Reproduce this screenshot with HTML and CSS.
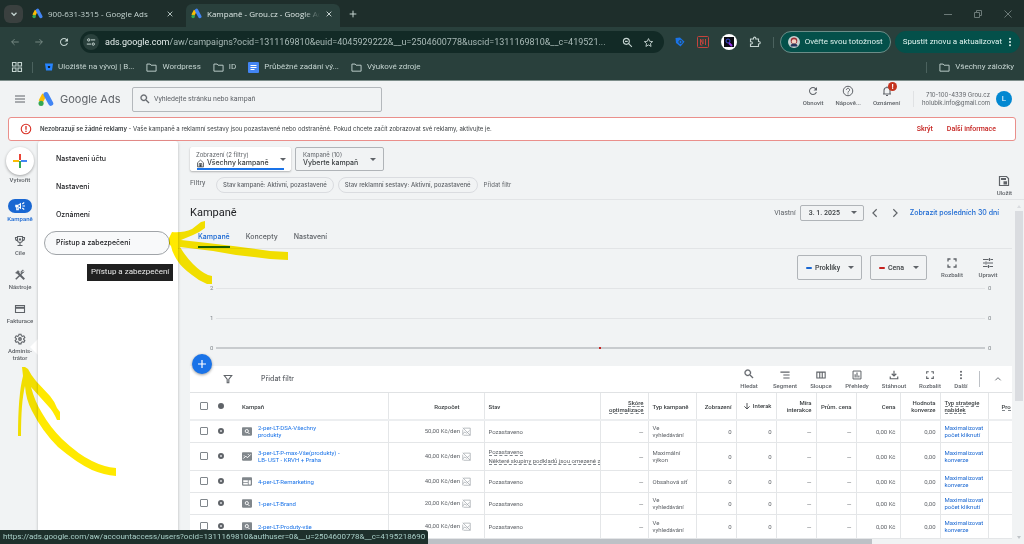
FILE: index.html
```html
<!DOCTYPE html>
<html lang="cs">
<head>
<meta charset="utf-8">
<title>Kampaně - Grou.cz - Google Ads</title>
<link rel="stylesheet" href="styles.css">
</head>
<body>
<svg class="sprite" aria-hidden="true">
  <symbol id="ads" viewBox="0 0 24 24"><path d="M9.5 5.5 4 16" stroke="#fbbc04" stroke-width="7" stroke-linecap="butt"/><path d="M12 5.2 19.2 18.6" stroke="#4285f4" stroke-width="7.4" stroke-linecap="round"/><circle cx="4.6" cy="18.6" r="3.8" fill="#34a853"/></symbol>
  <symbol id="close" viewBox="0 0 24 24"><path d="M5 5 19 19M19 5 5 19" stroke="currentColor" stroke-width="2.6"/></symbol>
  <symbol id="plus" viewBox="0 0 24 24"><path d="M12 4v16M4 12h16" stroke="currentColor" stroke-width="2.4"/></symbol>
  <symbol id="back" viewBox="0 0 24 24"><path d="M21 12H4M11 5l-7 7 7 7" stroke="currentColor" stroke-width="2" fill="none"/></symbol>
  <symbol id="forward" viewBox="0 0 24 24"><path d="M3 12h17M13 5l7 7-7 7" stroke="currentColor" stroke-width="2" fill="none"/></symbol>
  <symbol id="refresh" viewBox="0 0 24 24"><path fill="currentColor" d="M17.65 6.35C16.2 4.9 14.21 4 12 4c-4.42 0-7.99 3.58-7.99 8s3.57 8 7.99 8c3.73 0 6.84-2.55 7.73-6h-2.08c-.82 2.33-3.04 4-5.65 4-3.31 0-6-2.69-6-6s2.69-6 6-6c1.66 0 3.14.69 4.22 1.78L13 11h7V4l-2.35 2.35z"/></symbol>
  <symbol id="search" viewBox="0 0 24 24"><path fill="currentColor" stroke="currentColor" stroke-width=".6" d="M15.5 14h-.79l-.28-.27C15.41 12.59 16 11.11 16 9.5 16 5.91 13.09 3 9.5 3S3 5.91 3 9.5 5.91 16 9.5 16c1.61 0 3.09-.59 4.23-1.57l.27.28v.79l5 4.99L20.49 19l-4.99-5zm-6 0C7.01 14 5 11.99 5 9.5S7.01 5 9.5 5 14 7.01 14 9.5 11.99 14 9.5 14z"/></symbol>
  <symbol id="tune2" viewBox="0 0 24 24"><g fill="none" stroke="currentColor" stroke-width="2.4"><circle cx="6.500" cy="7" r="2.800"/><path d="M12 7h10M2 17h10"/><circle cx="17.500" cy="17" r="2.800"/></g></symbol>
  <symbol id="star" viewBox="0 0 24 24"><path d="m12 3.500 2.600 5.900 6.400.6-4.800 4.300 1.400 6.300L12 17.300l-5.600 3.300 1.400-6.300L3 10l6.400-.6z" fill="none" stroke="currentColor" stroke-width="2"/></symbol>
  <symbol id="zoomout" viewBox="0 0 24 24"><g fill="none" stroke="currentColor" stroke-width="2.400"><circle cx="9.500" cy="9.500" r="6.500"/><path d="m14.500 14.500 7 7M6.500 9.500h6"/></g></symbol>
  <symbol id="folder" viewBox="0 0 24 24"><path d="M2 4.500h7l2 2.500h11v13H2z" fill="none" stroke="currentColor" stroke-width="2"/></symbol>
  <symbol id="apps" viewBox="0 0 24 24"><path d="M3 3h7v7H3zM14 3h7v7h-7zM3 14h7v7H3zM14 14h7v7h-7z" fill="none" stroke="currentColor" stroke-width="2.200"/></symbol>
  <symbol id="chev-down" viewBox="0 0 24 24"><path d="m6 9 6 6 6-6" fill="none" stroke="currentColor" stroke-width="3"/></symbol>
  <symbol id="chev-left" viewBox="0 0 24 24"><path d="m16 3-9 9 9 9" fill="none" stroke="currentColor" stroke-width="2.800"/></symbol>
  <symbol id="chev-right" viewBox="0 0 24 24"><path d="m8 3 9 9-9 9" fill="none" stroke="currentColor" stroke-width="2.800"/></symbol>
  <symbol id="chev-up" viewBox="0 0 24 24"><path d="m4 16 8-8 8 8" fill="none" stroke="currentColor" stroke-width="2.800"/></symbol>
  <symbol id="dots" viewBox="0 0 24 24"><g fill="currentColor"><circle cx="12" cy="4" r="2.400"/><circle cx="12" cy="12" r="2.400"/><circle cx="12" cy="20" r="2.400"/></g></symbol>
  <symbol id="puzzle" viewBox="0 0 24 24"><path d="M3 6h6V4.500a2.300 2.300 0 0 1 4.600 0V6H19v5h1a2.400 2.400 0 0 1 0 5h-1v5H3v-5h1.500a2.200 2.200 0 0 0 0-4.500H3z" fill="none" stroke="currentColor" stroke-width="2.200"/></symbol>
  <symbol id="help" viewBox="0 0 24 24"><circle cx="12" cy="12" r="9.500" fill="none" stroke="currentColor" stroke-width="2"/><path d="M8.800 9.800a3.200 3.200 0 1 1 5 2.600c-1.300.9-1.800 1.300-1.800 2.800M12 16.800v2" fill="none" stroke="currentColor" stroke-width="2"/></symbol>
  <symbol id="bell" viewBox="0 0 24 24"><path d="M4 18h16M6 18v-7a6 6 0 0 1 12 0v7M12 3v2M10 21h4" fill="none" stroke="currentColor" stroke-width="2.200"/></symbol>
  <symbol id="alert" viewBox="0 0 24 24"><circle cx="12" cy="12" r="9.500" fill="none" stroke="currentColor" stroke-width="2.200"/><path d="M12 6v7.500M12 15.500V18" stroke="currentColor" stroke-width="2.600"/></symbol>
  <symbol id="horn" viewBox="0 0 24 24"><path d="M2.500 9.500h5.500l6-4v13l-6-4H2.500z" fill="currentColor"/><path d="M5.500 14v5.500h3V15M17 12h5M16.500 8l4-3M16.500 16l4 3" stroke="currentColor" stroke-width="2.200" fill="none"/><path d="m8.500 11.300 3.200-1.800v5l-3.200-1.800z" fill="#1967d2"/></symbol>
  <symbol id="trophy" viewBox="0 0 24 24"><g fill="none" stroke="currentColor" stroke-width="2.200"><path d="M7 3h10v7a5 5 0 0 1-10 0zM7 5H3v2a4 4 0 0 0 4 4M17 5h4v2a4 4 0 0 1-4 4M12 15v6M7 21h10"/></g><circle cx="12" cy="9" r="2.300" fill="currentColor"/></symbol>
  <symbol id="tools" viewBox="0 0 24 24"><g stroke="currentColor" fill="none"><path d="m9.500 9.500 11 11" stroke-width="3.800"/><path d="M3.500 20.500 16.500 8" stroke-width="3"/><path d="M20.500 5.500 17 8l-1-3 2.500-2.500a4 4 0 0 0-4 5.500" stroke-width="2"/><path d="m3 8 5-5 3 3-1 1 1 2-2 2-3-2z" fill="currentColor" stroke-width="1"/></g></symbol>
  <symbol id="card" viewBox="0 0 24 24"><path d="M3 5h18v14H3z" fill="none" stroke="currentColor" stroke-width="2.200"/><path d="M3 9.500h18" stroke="currentColor" stroke-width="4"/></symbol>
  <symbol id="gear" viewBox="0 0 24 24"><path d="M10 2.500h4l.7 3 2 1.200 3-1 2 3.500-2.300 2v1.800l2.300 2-2 3.500-3-1-2 1.200-.7 3h-4l-.7-3-2-1.200-3 1-2-3.500 2.300-2v-1.800l-2.300-2 2-3.500 3 1 2-1.200z" fill="none" stroke="currentColor" stroke-width="2.200"/><circle cx="12" cy="12" r="3.800" fill="currentColor"/><circle cx="12" cy="12" r="1" fill="#f1f3f4"/></symbol>
  <symbol id="house" viewBox="0 0 24 24"><path d="M4 21V10l8-7 8 7v11zM8.500 21v-9h7v9" fill="none" stroke="currentColor" stroke-width="2"/><path d="M10 14h4v7h-4z" fill="currentColor"/></symbol>
  <symbol id="save" viewBox="0 0 24 24"><path d="M3 3h14l4 4v14H3z" fill="none" stroke="currentColor" stroke-width="2.400"/><path d="M6 6h10v4H6z" fill="currentColor"/><path d="M11 12.500h7V19h-7z" fill="currentColor"/></symbol>
  <symbol id="expand" viewBox="0 0 24 24"><path d="M4 9V4h5M15 4h5v5M20 15v5h-5M9 20H4v-5" fill="none" stroke="currentColor" stroke-width="2.600"/></symbol>
  <symbol id="sliders" viewBox="0 0 24 24"><path d="M2 5h11M17 5h5M15 2v6M2 12h4M10 12h12M8 9v6M2 19h9M15 19h7M13 16v6" fill="none" stroke="currentColor" stroke-width="2.400"/></symbol>
  <symbol id="funnel" viewBox="0 0 24 24"><path d="M3 3.500h18l-7 9V21h-4v-8.500z" fill="none" stroke="currentColor" stroke-width="2.600"/></symbol>
  <symbol id="segment" viewBox="0 0 24 24"><path d="M1 5h22M8 12h15M8 19h15" stroke="currentColor" stroke-width="2.600"/></symbol>
  <symbol id="columns" viewBox="0 0 24 24"><path d="M2 5h20v14H2zM9 5v14M15 5v14" fill="none" stroke="currentColor" stroke-width="2.600"/></symbol>
  <symbol id="report" viewBox="0 0 24 24"><path d="M2.500 2.500h19v19h-19z" fill="none" stroke="currentColor" stroke-width="2.400"/><path d="M7.500 10v8M12 6v12M16.500 13v5" stroke="currentColor" stroke-width="2.600"/></symbol>
  <symbol id="download" viewBox="0 0 24 24"><path d="M12 2v12M6.500 9l5.500 5.500L17.500 9M3 15.500V21h18v-5.500" fill="none" stroke="currentColor" stroke-width="2.800"/></symbol>
  <symbol id="sort" viewBox="0 0 24 24"><path d="M12 3v17M4 13l8 8 8-8" fill="none" stroke="currentColor" stroke-width="2.600"/></symbol>
  <symbol id="type-search" viewBox="0 0 24 20"><rect width="24" height="20" rx="2" fill="#80868b"/><circle cx="11.500" cy="9" r="3.800" fill="none" stroke="#fff" stroke-width="2.200"/><path d="m14 12 4 4" stroke="#fff" stroke-width="2.400"/></symbol>
  <symbol id="type-pmax" viewBox="0 0 24 20"><rect width="24" height="20" rx="2" fill="#80868b"/><path d="m3 15 6-6 4 4 8-8" fill="none" stroke="#fff" stroke-width="2.400"/><circle cx="15" cy="5" r="1.300" fill="#fff"/><circle cx="5" cy="8" r="1.300" fill="#fff"/></symbol>
  <symbol id="type-display" viewBox="0 0 24 20"><rect width="24" height="20" rx="2" fill="#80868b"/><path d="M3 7h11v4H3zM3 13h11v4H3zM16 7h5v10h-5z" fill="#fff"/></symbol>
  <symbol id="spark" viewBox="0 0 24 24"><path d="M4 3h18v19H4M2 2l20 20M2 18l6-5 4 4 8-8M2 7v15" fill="none" stroke="#9aa0a6" stroke-width="1.800"/></symbol>
</svg>

<header class="browser">
  <div class="tabstrip">
    <button class="tab-search" aria-label="Hledat karty"><svg class="i10"><use href="#chev-down"/></svg></button>
    <div class="tab"><svg class="i11"><use href="#ads"/></svg><span class="tab-title">900-631-3515 - Google Ads</span><button class="plain" aria-label="Zavřít"><svg class="i8"><use href="#close"/></svg></button></div>
    <div class="tab tab-active"><svg class="i11"><use href="#ads"/></svg><span class="tab-title fade">Kampaně - Grou.cz - Google Ads</span><button class="plain" aria-label="Zavřít"><svg class="i8"><use href="#close"/></svg></button></div>
    <button class="plain new-tab" aria-label="Nová karta"><svg class="i10"><use href="#plus"/></svg></button>
    <div class="window-controls">
      <button class="plain" aria-label="Minimalizovat"><svg class="i8" viewBox="0 0 8 8"><path d="M0 4.500h8" stroke="currentColor"/></svg></button>
      <button class="plain" aria-label="Obnovit okno"><svg class="i8" viewBox="0 0 8 8"><path d="M.5 2.500h5v5h-5zM2.500 2V.5h5v5H6" fill="none" stroke="currentColor"/></svg></button>
      <button class="plain" aria-label="Zavřít okno"><svg class="i8" viewBox="0 0 8 8"><path d="m.5.5 7 7M7.500.5l-7 7" stroke="currentColor"/></svg></button>
    </div>
  </div>
  <div class="toolbar">
    <button class="plain dim" aria-label="Zpět"><svg class="i10"><use href="#back"/></svg></button>
    <button class="plain dim" aria-label="Vpřed"><svg class="i10"><use href="#forward"/></svg></button>
    <button class="plain" aria-label="Načíst znovu"><svg class="i12"><use href="#refresh"/></svg></button>
    <div class="omnibox">
      <span class="site-info"><svg class="i10"><use href="#tune2"/></svg></span>
      <span class="url"><b>ads.google.com</b>/aw/campaigns?ocid=1311169810&amp;euid=4045929222&amp;__u=2504600778&amp;uscid=1311169810&amp;__c=419521...</span>
      <svg class="i11"><use href="#zoomout"/></svg>
      <svg class="i11"><use href="#star"/></svg>
    </div>
    <div class="extensions">
      <svg class="i10" viewBox="0 0 10 10"><path d="M.5 1 5 .5l4.500 4.200L5.500 9.500 1 6z" fill="#1a73e8"/><circle cx="5.500" cy="5" r="1.600" fill="none" stroke="#29403c"/></svg>
      <svg class="i12" viewBox="0 0 12 12"><rect x=".5" y=".5" width="11" height="11" rx="1" fill="none" stroke="#c5433c"/><path d="M3.500 9V3l2.500 5V3M8.500 3v6M3.500 9h2" fill="none" stroke="#c5433c"/></svg>
      <svg class="i16" viewBox="0 0 16 16"><circle cx="8" cy="8" r="8" fill="#fff"/><rect x="3" y="3" width="10" height="10" fill="#0b0b14"/><circle cx="7" cy="7" r="2" fill="none" stroke="#3d4ed8"/><path d="m8 9 3 3" stroke="#9333ea" stroke-width="2"/></svg>
      <svg class="i12"><use href="#puzzle"/></svg>
    </div>
    <span class="vline"></span>
    <button class="chip-verify"><svg class="i12" viewBox="0 0 12 12"><circle cx="6" cy="6" r="6" fill="#c9d3d2"/><circle cx="6" cy="4.800" r="3.300" fill="#9b2f35"/><circle cx="6" cy="5.500" r="2.300" fill="#f3d3c4"/><path d="M2.500 10.500a3.500 3 0 0 1 7 0" fill="#27365c"/></svg>Ověřte svou totožnost</button>
    <button class="chip-restart">Spustit znovu a aktualizovat<svg class="i10"><use href="#dots"/></svg></button>
  </div>
  <nav class="bookmarks" aria-label="Záložky">
    <button class="plain" aria-label="Aplikace"><svg class="i12"><use href="#apps"/></svg></button>
    <span class="vline"></span>
    <a href="#"><svg class="i8" viewBox="0 0 8 8"><path d="M0 .5h8L7 7.500H1z" fill="#2684ff"/><path d="M2.800 3h2.400L5 5H3z" fill="#123"/></svg>Uložiště na vývoj | B...</a>
    <a href="#"><svg class="i11"><use href="#folder"/></svg>Wordpress</a>
    <a href="#"><svg class="i11"><use href="#folder"/></svg>ID</a>
    <a href="#"><svg class="i11" viewBox="0 0 11 11"><rect width="11" height="11" rx="1" fill="#4285f4"/><path d="M2.500 3.500h6M2.500 5.500h6M2.500 7.500h4" stroke="#fff"/></svg>Průběžné zadání vý...</a>
    <a href="#"><svg class="i11"><use href="#folder"/></svg>Výukové zdroje</a>
    <span class="vline push"></span>
    <a href="#"><svg class="i11"><use href="#folder"/></svg>Všechny záložky</a>
  </nav>
</header>

<div class="app">
  <header class="app-head">
    <button class="plain menu" aria-label="Nabídka"><svg class="i12" viewBox="0 0 12 12"><path d="M1 3h10M1 6h10M1 9h10" stroke="currentColor"/></svg></button>
    <a class="brand" href="#"><svg class="i16"><use href="#ads"/></svg>Google Ads</a>
    <label class="search"><svg class="i12"><use href="#search"/></svg><input type="search" aria-label="Hledat" placeholder="Vyhledejte stránku nebo kampaň"></label>
    <div class="head-actions">
      <button class="stack"><svg class="i12"><use href="#refresh"/></svg>Obnovit</button>
      <button class="stack"><svg class="i12"><use href="#help"/></svg>Nápově...</button>
      <button class="stack notif"><svg class="i12"><use href="#bell"/></svg>Oznámení<span class="badge">!</span></button>
    </div>
    <div class="account"><span>710-100-4339 Grou.cz</span><span>holubik.info@gmail.com</span></div>
    <button class="avatar">L</button>
  </header>

  <div class="banner" role="alert">
    <svg class="i12"><use href="#alert"/></svg>
    <p><b>Nezobrazují se žádné reklamy</b> - Vaše kampaně a reklamní sestavy jsou pozastavené nebo odstraněné. Pokud chcete začít zobrazovat své reklamy, aktivujte je.</p>
    <a href="#">Skrýt</a><a href="#">Další informace</a>
  </div>

  <div class="body">
    <nav class="rail" aria-label="Hlavní">
      <button class="rail-item create"><span class="create-icon"><svg class="i14" viewBox="0 0 14 14"><path d="M7 0v6" stroke="#ea4335" stroke-width="2"/><path d="M8 7h6" stroke="#4285f4" stroke-width="2"/><path d="M7 7v7" stroke="#34a853" stroke-width="2"/><path d="M0 7h6" stroke="#fbbc04" stroke-width="2"/></svg></span>Vytvořit</button>
      <a href="#" class="rail-item current"><span class="pill"><svg class="i12"><use href="#horn"/></svg></span>Kampaně</a>
      <a href="#" class="rail-item"><svg class="i12"><use href="#trophy"/></svg>Cíle</a>
      <a href="#" class="rail-item"><svg class="i12"><use href="#tools"/></svg>Nástroje</a>
      <a href="#" class="rail-item"><svg class="i12"><use href="#card"/></svg>Fakturace</a>
      <a href="#" class="rail-item admin"><svg class="i12"><use href="#gear"/></svg><span>Adminis-<br>trátor</span></a>
    </nav>

    <nav class="panel" aria-label="Administrátor">
      <a href="#">Nastavení účtu</a>
      <a href="#">Nastavení</a>
      <a href="#">Oznámení</a>
      <a href="#" class="hovered">Přístup a zabezpečení<span class="tooltip">Přístup a zabezpečení</span></a>
    </nav>

    <main class="content">
      <section class="scope">
        <div class="scope-main">
          <div class="pickers">
            <div class="picker raised"><label for="view">Zobrazení (2 filtry)</label><div class="picker-value"><svg class="i9"><use href="#house"/></svg><select id="view"><option>Všechny kampaně</option></select></div><i class="caret"></i></div>
            <div class="picker"><label for="camp">Kampaně (10)</label><div class="picker-value"><select id="camp"><option>Vyberte kampaň</option></select></div><i class="caret"></i></div>
          </div>
          <div class="filters">
            <span class="filters-label">Filtry</span>
            <button class="filter-chip">Stav kampaně: Aktivní, pozastavené</button>
            <button class="filter-chip">Stav reklamní sestavy: Aktivní, pozastavené</button>
            <button class="plain add-filter">Přidat filtr</button>
          </div>
        </div>
        <button class="stack save"><svg class="i12"><use href="#save"/></svg>Uložit</button>
      </section>

      <div class="scroll">
        <div class="sheet">
          <div class="title-row">
            <h1>Kampaně</h1>
            <label for="date" class="date-label">Vlastní</label>
            <div class="select date"><select id="date"><option>3. 1. 2025</option></select><i class="caret"></i></div>
            <button class="plain" aria-label="Předchozí"><svg class="i10"><use href="#chev-left"/></svg></button>
            <button class="plain" aria-label="Další období"><svg class="i10"><use href="#chev-right"/></svg></button>
            <a href="#" class="last30">Zobrazit posledních 30 dní</a>
          </div>
          <div class="tabs" role="tablist">
            <button role="tab" class="on" aria-selected="true">Kampaně</button>
            <button role="tab">Koncepty</button>
            <button role="tab">Nastavení</button>
          </div>

          <section class="chart">
            <div class="chart-tools">
              <div class="select metric"><i class="dash blue"></i><select aria-label="Metrika 1"><option>Prokliky</option></select><i class="caret"></i></div>
              <div class="select metric"><i class="dash red"></i><select aria-label="Metrika 2"><option>Cena</option></select><i class="caret"></i></div>
              <button class="stack"><svg class="i12"><use href="#expand"/></svg>Rozbalit</button>
              <button class="stack"><svg class="i12"><use href="#sliders"/></svg>Upravit</button>
            </div>
            <div class="plot">
              <div class="grid"><span>2</span><i></i><span>0</span></div>
              <div class="grid"><span>1</span><i></i><span>0</span></div>
              <div class="grid base"><span>0</span><i></i><span>0</span></div>
            </div>
          </section>

          <section class="table-card">
            <button class="fab" aria-label="Přidat kampaň"><svg class="i12"><use href="#plus"/></svg></button>
            <div class="table-tools">
              <button class="plain" aria-label="Filtr"><svg class="i10"><use href="#funnel"/></svg></button>
              <button class="plain table-filter">Přidat filtr</button>
              <div class="tool-list">
                <button class="stack"><svg class="i12"><use href="#search"/></svg>Hledat</button>
                <button class="stack"><svg class="i10"><use href="#segment"/></svg>Segment</button>
                <button class="stack"><svg class="i10"><use href="#columns"/></svg>Sloupce</button>
                <button class="stack"><svg class="i10"><use href="#report"/></svg>Přehledy</button>
                <button class="stack"><svg class="i10"><use href="#download"/></svg>Stáhnout</button>
                <button class="stack"><svg class="i10"><use href="#expand"/></svg>Rozbalit</button>
                <button class="stack"><svg class="i10"><use href="#dots"/></svg>Další</button>
              </div>
              <span class="tool-sep"></span>
              <button class="plain" aria-label="Sbalit"><svg class="i8"><use href="#chev-up"/></svg></button>
            </div>
            <table>
              <colgroup><col class="w24"><col class="w14"><col><col class="w96"><col class="w116"><col class="w48"><col class="w48"><col class="w40"><col class="w40"><col class="w40"><col class="w40"><col class="w44"><col class="w40"><col class="w48"><col class="w24"></colgroup>
              <thead><tr>
                <th class="first"><input type="checkbox" aria-label="Vybrat vše"></th><th class="dot-cell"><i class="dot full"></i></th><th class="name">Kampaň</th><th class="num budget">Rozpočet</th><th>Stav</th><th class="num"><u>Skóre</u><br><u>optimalizace</u></th><th class="nowrap">Typ kampaně</th><th class="num">Zobrazení</th><th class="num nowrap"><svg class="i8"><use href="#sort"/></svg> Interak</th><th class="num">Míra interakce</th><th class="num nowrap">Prům. cena</th><th class="num">Cena</th><th class="num">Hodnota konverze</th><th class="nowrap"><u>Typ strategie</u><br><u>nabídek</u></th><th class="last"><u>Pro</u></th>
              </tr></thead>
              <tbody>
                <tr><td class="first"><input type="checkbox" aria-label="Vybrat řádek"></td><td class="dot-cell"><i class="dot"></i></td><td class="name"><div><svg class="type"><use href="#type-search"/></svg><a href="#">2-per-LT-DSA-Všechny<br>produkty</a></div></td><td class="num budget">50,00 Kč/den <svg class="i9"><use href="#spark"/></svg></td><td>Pozastaveno</td><td class="num">—</td><td>Ve vyhledávání</td><td class="num">0</td><td class="num">0</td><td class="num">—</td><td class="num">—</td><td class="num">0,00 Kč</td><td class="num">0,00</td><td><a href="#">Maximalizovat počet kliknutí</a></td><td></td></tr>
                <tr class="tall"><td class="first"><input type="checkbox" aria-label="Vybrat řádek"></td><td class="dot-cell"><i class="dot"></i></td><td class="name"><div><svg class="type"><use href="#type-pmax"/></svg><a href="#">3-per-LT-P-max-Vše(produkty) -<br>LB- UST - KRVH + Praha</a></div></td><td class="num budget">40,00 Kč/den <svg class="i9"><use href="#spark"/></svg></td><td class="status"><u>Pozastaveno</u><br><u>Některé skupiny podkladů jsou omezené z</u></td><td class="num">—</td><td>Maximální výkon</td><td class="num">0</td><td class="num">0</td><td class="num">—</td><td class="num">—</td><td class="num">0,00 Kč</td><td class="num">0,00</td><td><a href="#">Maximalizovat konverze</a></td><td></td></tr>
                <tr><td class="first"><input type="checkbox" aria-label="Vybrat řádek"></td><td class="dot-cell"><i class="dot"></i></td><td class="name"><div><svg class="type"><use href="#type-display"/></svg><a href="#">4-per-LT-Remarketing</a></div></td><td class="num budget">40,00 Kč/den <svg class="i9"><use href="#spark"/></svg></td><td>Pozastaveno</td><td class="num">—</td><td class="nowrap">Obsahová síť</td><td class="num">0</td><td class="num">0</td><td class="num">—</td><td class="num">—</td><td class="num">0,00 Kč</td><td class="num">0,00</td><td><a href="#">Maximalizovat konverze</a></td><td></td></tr>
                <tr><td class="first"><input type="checkbox" aria-label="Vybrat řádek"></td><td class="dot-cell"><i class="dot"></i></td><td class="name"><div><svg class="type"><use href="#type-search"/></svg><a href="#">1-per-LT-Brand</a></div></td><td class="num budget">20,00 Kč/den <svg class="i9"><use href="#spark"/></svg></td><td>Pozastaveno</td><td class="num">—</td><td>Ve vyhledávání</td><td class="num">0</td><td class="num">0</td><td class="num">—</td><td class="num">—</td><td class="num">0,00 Kč</td><td class="num">0,00</td><td><a href="#">Maximalizovat počet kliknutí</a></td><td></td></tr>
                <tr><td class="first"><input type="checkbox" aria-label="Vybrat řádek"></td><td class="dot-cell"><i class="dot"></i></td><td class="name"><div><svg class="type"><use href="#type-search"/></svg><a href="#">2-per-LT-Produty-vše</a></div></td><td class="num budget">40,00 Kč/den <svg class="i9"><use href="#spark"/></svg></td><td>Pozastaveno</td><td class="num">—</td><td>Ve vyhledávání</td><td class="num">0</td><td class="num">0</td><td class="num">—</td><td class="num">—</td><td class="num">0,00 Kč</td><td class="num">0,00</td><td><a href="#">Maximalizovat konverze</a></td><td></td></tr>
              </tbody>
            </table>
            <div class="hscroll"><i></i></div>
          </section>
        </div>
        <div class="vscroll"><i class="up"></i><i class="thumb"></i><i class="down"></i></div>
      </div>
    </main>
  </div>
</div>

<div class="status-url">https://ads.google.com/aw/accountaccess/users?ocid=1311169810&amp;authuser=0&amp;__u=2504600778&amp;__c=4195218690</div>

<svg class="marker" viewBox="0 0 300 490" aria-hidden="true">
  <g fill="#ffe900">
    <path d="M169 238 172 232Q183 233 192 229L201 222 205 221V228Q200 232 193 235L181 240Q208 243 233 246L270 251 288 252V260L270 259 236 255 213 251 180 247Q186 257 193 264 201 272 208 275L212 276V284H207Q199 281 192 275 181 267 177 260 172 252 171 246L169 244Z"/>
    <path d="M22 367H25L28 369Q31 375 36 381L50 396Q55 402 57 408L60 412V420H57Q53 411 49 407L31 387Q35 402 42 413 50 427 62 439 79 455 92 461 104 467 116 468V476Q104 475 92 470 77 463 58 447 42 431 32 411 26 400 25 386 21 402 21 436H18Q18 395 23 376Z"/>
  </g>
</svg>
</body>
</html>
```
FILE: styles.css
```css
* { box-sizing: border-box; }

body {
  margin: 0;
  height: 100vh;
  display: flex;
  flex-direction: column;
  overflow: hidden;
  position: relative;
  background: #f1f3f4;
  color: #3c4043;
  font: 7px/8px Roboto, "Liberation Sans", sans-serif;
}

a { color: #1967d2; text-decoration: none; }
button, input, select { font: inherit; color: inherit; margin: 0; }
button { border: 0; background: none; padding: 0; white-space: nowrap; }
svg { flex: none; }
b { font-weight: 500; }

.sprite { position: absolute; width: 0; height: 0; }
.plain { display: flex; align-items: center; }
.i8 { width: 8px; height: 8px; }
.i9 { width: 9px; height: 9px; }
.i10 { width: 10px; height: 10px; }
.i11 { width: 11px; height: 11px; }
.i12 { width: 12px; height: 12px; }
.i14 { width: 14px; height: 14px; }
.i16 { width: 16px; height: 16px; }
.vline { width: 1px; height: 11px; background: #4b625e; }

/* Browser frame */
.browser {
  flex: none;
  background: #29403c;
  color: #c5d4d1;
  font: 8px/12px "Open Sans", "Noto Sans", sans-serif;
  border-bottom: 1px solid #7d8d8a;
}
.tabstrip { display: flex; align-items: center; height: 27px; padding-left: 4px; background: #1e2e2b; }
.tab-search { display: grid; place-items: center; width: 19px; height: 18px; border-radius: 6px; background: #3a403f; }
.tab { display: flex; align-items: center; gap: 5px; width: 154px; height: 23px; margin-top: 4px; padding: 0 7px 4px 5px; }
.tab:nth-child(2) { margin-left: 4px; }
.tab-active { margin-left: 5px; border-radius: 6px 6px 0 0; background: #29403c; color: #dde7e5; }
.tab-title { flex: 1; overflow: hidden; white-space: nowrap; }
.fade { mask-image: linear-gradient(to right, #000 85%, transparent); }
.new-tab { margin-left: 8px; }
.window-controls { display: flex; gap: 22px; margin-left: auto; padding-right: 12px; color: #6c7a78; }
.toolbar { display: flex; align-items: center; height: 30px; padding: 0 4px 0 10px; font-family: Roboto, sans-serif; }
.toolbar > .plain { margin-right: 14px; }
.toolbar > .plain:nth-child(3) { margin-right: 10px; }
.toolbar > .dim { color: #82958f; }
.omnibox { display: flex; align-items: center; gap: 10px; flex: 1; min-width: 0; height: 22px; padding: 0 10px 0 3px; border-radius: 11px; background: #122a26; }
.site-info { display: grid; place-items: center; width: 16px; height: 16px; border-radius: 8px; background: #29403c; }
.url { flex: 1; margin-left: -4px; overflow: hidden; white-space: nowrap; font-size: 9px; color: #a9bab7; }
.url b { font-weight: 400; color: #e6efed; }
.extensions { display: flex; align-items: center; gap: 12px; margin: 0 12px 0 11px; }
.chip-verify, .chip-restart { display: flex; align-items: center; gap: 5px; height: 22px; border-radius: 11px; background: #04504a; color: #dff3ef; }
.chip-verify { margin: 0 4px 0 6px; padding: 0 7px; border: 1px solid #6c8d88; }
.chip-restart { gap: 3px; padding: 0 5px 0 8px; }
.bookmarks { display: flex; align-items: center; gap: 12px; height: 23px; padding: 0 10px 3px 11px; font-family: Roboto, sans-serif; }
.bookmarks a { display: flex; align-items: center; gap: 5px; color: inherit; white-space: nowrap; }
.bookmarks > .vline { margin-left: -3px; }
.bookmarks > .push { margin-left: auto; }

/* Application header */
.app { flex: 1; min-height: 0; display: flex; flex-direction: column; }
.app-head { flex: none; display: flex; align-items: center; height: 36px; padding: 0 12px 0 14px; color: #5f6368; }
.brand { display: flex; align-items: center; gap: 6px; margin-left: 12px; width: 94px; font: 11px/14px Inter, sans-serif; color: #5f6368; white-space: nowrap; }
.search { display: flex; align-items: center; gap: 3px; width: 250px; height: 25px; padding: 0 6px; border: 1px solid #b4b8bc; border-radius: 2px; }
.search input { flex: 1; min-width: 0; border: 0; padding: 0; background: none; outline: 0; }
.search input::placeholder { color: #5f6368; opacity: 1; }
.stack { display: flex; flex-direction: column; align-items: center; gap: 2px; font-size: 6px; font-weight: 500; color: #5f6368; }
.head-actions { display: flex; gap: 12px; margin-left: auto; padding-bottom: 6px; }
.notif { position: relative; }
.badge { position: absolute; left: 15px; top: -3px; width: 9px; height: 9px; border-radius: 5px; background: #c5341f; color: #fff; font: 700 8px/9px Roboto, sans-serif; }
.account { display: flex; flex-direction: column; align-items: flex-end; margin-left: 13px; padding: 0 6px 0 8px; border-left: 1px solid #e0e2e4; font: 6px/8px Inter, sans-serif; }
.avatar { width: 16px; height: 16px; border-radius: 8px; background: #0288d1; color: #fff; font-size: 8px; }
.banner { flex: none; display: flex; align-items: center; height: 24px; margin: 0 8px; padding: 0 19px 0 11px; border: 1px solid #ea8f8b; border-radius: 3px; background: #fff; color: #3c4043; }
.banner svg { color: #d93025; }
.banner p { flex: 1; margin: 0 0 0 8px; white-space: nowrap; overflow: hidden; font: 6px/8px Inter, sans-serif; }
.banner b { font-weight: 600; }
.banner a { margin-left: 14px; color: #c5221f; font-weight: 500; }

/* Side navigation */
.body { flex: 1; min-height: 0; display: flex; }
.rail { flex: none; display: flex; flex-direction: column; gap: 13px; width: 38px; padding-top: 6px; }
.rail-item { display: flex; flex-direction: column; align-items: center; gap: 2px; padding-left: 2px; font-size: 6px; line-height: 7px; font-weight: 500; text-align: center; color: #5f6368; }
.create { gap: 1px; margin-bottom: 3px; }
.create-icon { display: grid; place-items: center; width: 28px; height: 28px; border-radius: 14px; background: #fff; box-shadow: 0 1px 3px #0005; }
.current { color: #1967d2; }
.pill { display: grid; place-items: center; width: 24px; height: 14px; border-radius: 7px; background: #1967d2; color: #fff; }
.admin { position: relative; margin-top: -4px; }
.admin::after { content: ""; position: absolute; right: 0; top: 6px; border: 8px solid transparent; border-left: 0; border-right-color: #fff; }
.panel { flex: none; z-index: 2; display: flex; flex-direction: column; gap: 4px; width: 140px; padding: 6px 8px 0 6px; border-radius: 3px 3px 0 0; background: #fff; box-shadow: 0 1px 3px #0004; font-family: Inter, sans-serif; }
.panel a { position: relative; display: flex; align-items: center; height: 24px; padding-left: 11px; border: 1px solid transparent; border-radius: 12px; color: #202124; font-weight: 500; }
.panel .hovered { border-color: #a0a4a8; background: #f8f9fa; }
.tooltip { position: absolute; left: 42px; top: 32px; padding: 2px 4px 3px; background: #202020; color: #e8e8e8; font: 8px/12px Roboto, sans-serif; white-space: nowrap; }

/* Content */
.content { flex: 1; min-width: 0; display: flex; flex-direction: column; }
.scope { flex: none; display: flex; margin-left: 12px; height: 59px; padding: 6px 12px 0 0; border-bottom: 1px solid #e2e4e6; }
.scope-main { flex: 1; }
.pickers { display: flex; gap: 4px; font-family: Inter, sans-serif; }
.picker { position: relative; width: 89px; height: 24px; padding: 3px 7px 2px; border: 1px solid #b0b4b8; border-radius: 2px; }
.picker label { display: block; font-size: 6px; line-height: 7px; color: #5f6368; }
.picker-value { display: flex; align-items: center; gap: 2px; height: 10px; }
.picker select, .select select { flex: 1; min-width: 0; appearance: none; border: 0; padding: 0; background: none; font-weight: 500; outline: 0; color: #3c4043; }
.picker .caret { position: absolute; right: 7px; top: 10px; }
.raised { width: 101px; padding: 3px 5px 2px; border-color: #fff; background: #fff; box-shadow: 0 1px 2px #0004; }
.raised .caret { right: 4px; }
.raised::after { content: ""; position: absolute; left: 6px; right: 6px; bottom: 0; height: 2px; background: #1a73e8; }
.caret { border: 3px solid transparent; border-top-color: #5f6368; border-bottom: 0; }
.filters { display: flex; align-items: center; gap: 4px; margin-top: 6px; color: #5f6368; font-family: Inter, sans-serif; font-size: 6px; }
.filters-label { width: 22px; margin-bottom: 5px; font: 7px/8px Roboto, sans-serif; }
.filter-chip { height: 16px; padding: 0 6px; border: 1px solid #dadce0; border-radius: 8px; font-weight: 500; color: #5f6368; }
.add-filter { margin-left: 2px; }
.save { align-self: flex-end; padding-bottom: 2px; }
.scroll { flex: 1; min-height: 0; display: flex; }
.sheet { flex: 1; min-width: 0; }
.title-row { display: flex; align-items: center; height: 25px; padding: 0 15px 0 12px; }
h1 { flex: 1; margin: 0; font: 400 11px/14px Roboto, sans-serif; color: #202124; }
.date-label { color: #5f6368; margin-right: 4px; }
.select { display: flex; align-items: center; border: 1px solid #b0b4b8; border-radius: 2px; }
.date { width: 64px; height: 16px; margin-right: 6px; padding: 0 6px 0 8px; }
.title-row .plain { margin-right: 10px; color: #5f6368; }
.last30 { font-family: Inter, sans-serif; font-weight: 500; }
.tabs { display: flex; gap: 16px; height: 24px; padding-left: 20px; margin-right: 2px; border-bottom: 1px solid #e2e4e6; font-family: Inter, sans-serif; }
.tabs button { padding-top: 3px; border-bottom: 2px solid transparent; font-weight: 500; color: #5f6368; }
.tabs .on { color: #1967d2; border-color: #1967d2; }
.chart { padding: 6px 12px 0 22px; height: 117px; }
.chart-tools { display: flex; align-items: center; gap: 8px; justify-content: flex-end; }
.chart-tools .stack { width: 28px; }
.metric { width: 65px; height: 25px; padding: 0 7px 0 8px; }
.metric + .metric { width: 57px; }
.metric + .stack { margin-left: 3px; }
.dash { width: 6px; height: 2px; margin-right: 3px; border-radius: 1px; }
.blue { background: #1967d2; }
.red { background: #c5221f; }
.plot { margin-top: 3px; padding: 0 8px 0 10px; }
.grid { display: flex; align-items: center; height: 10px; margin-bottom: 20px; font-size: 6px; color: #80868b; }
.grid span { width: 6px; }
.grid i { flex: 1; height: 1px; margin-right: 3px; background: #e2e4e6; }
.base i { height: 2px; background: linear-gradient(to right, #c8cbce calc(50% - 1px), #c5221f calc(50% - 1px) calc(50% + 1px), #c8cbce calc(50% + 1px)); }
.table-card { position: relative; margin: 0 2px 0 12px; background: #fff; }
.fab { position: absolute; left: 2px; top: -12px; display: grid; place-items: center; width: 20px; height: 20px; border-radius: 10px; background: #1a73e8; color: #fff; box-shadow: 0 1px 3px #0006; }
.table-tools { display: flex; align-items: center; height: 27px; padding: 0 10px 0 33px; color: #5f6368; border-bottom: 1px solid #e0e2e4; }
.table-filter { flex: 1; margin-left: 28px; font-family: Inter, sans-serif; font-weight: 500; }
.tool-list { display: grid; grid-template-columns: 36px 36px 36px 36px 38px 34px 28px; align-items: end; }
.tool-sep { width: 1px; height: 16px; margin: 0 14px 0 4px; background: #bdc1c6; }

table { width: 100%; table-layout: fixed; border-collapse: collapse; font-size: 6px; line-height: 7px; color: #5f6368; }
.w14 { width: 14px; } .w24 { width: 24px; } .w40 { width: 40px; } .w44 { width: 44px; }
.w48 { width: 48px; } .w96 { width: 96px; } .w116 { width: 116px; }
th, td { height: 22px; padding: 0 4px; overflow: hidden; text-align: left; vertical-align: middle; border-right: 1px solid #e4e6e8; border-bottom: 1px solid #e4e6e8; }
th { height: 27px; font-weight: 500; color: #3c4043; border-bottom: 2px solid #eceef0; }
.tall td { height: 28px; }
tbody tr:last-child td { height: 24px; }
.num { text-align: right; }
.nowrap, .status { white-space: nowrap; }
.first { padding: 0 0 0 10px; }
.dot-cell, .first { border-right: 0; }
.dot-cell { padding: 0 0 0 4px; }
.name { padding-left: 14px; }
.name div { display: flex; align-items: center; gap: 6px; }
.name a { color: #1a73e8; }
.type { width: 10px; height: 9px; }
.budget { padding-right: 13px; white-space: nowrap; }
th.budget { padding-right: 24px; }
.last { padding: 0 0 0 13px; border-right: 0; }
td:last-child { border-right: 0; }
td svg, th svg { vertical-align: middle; }
u { text-decoration: none; border-bottom: 1px dashed #80868b; }
.status { line-height: 9px; padding-right: 0; }
.dot { display: block; width: 6px; height: 6px; border-radius: 3px; border: 2px solid #5f6368; background: #dadce0; }
.full { background: #5f6368; }
input[type="checkbox"] { display: block; appearance: none; width: 8px; height: 8px; border: 1px solid #80868b; border-radius: 1px; background: #fff; }
.hscroll { height: 5px; background: #f1f3f4; }
.hscroll i { display: block; width: 83%; height: 5px; background: #bdc1c6; }
.vscroll { flex: none; display: flex; flex-direction: column; align-items: center; width: 10px; padding: 5px 1px; }
.thumb { width: 8px; flex: 0 0 57%; margin-top: 3px; background: #dadce0; }
.up { border: 2px solid transparent; border-top: 0; border-bottom: 3px solid #dadce0; }
.down { margin-top: auto; border: 2px solid transparent; border-bottom: 0; border-top: 3px solid #c0c4c8; }

/* Overlays */
.status-url { position: absolute; left: 0; bottom: 0; z-index: 3; padding: 1px 3px; border-radius: 0 3px 0 0; background: #1e302c; color: #a9cfc8; font: 8px/12px Roboto, sans-serif; white-space: nowrap; }
.marker { position: absolute; left: 0; top: 0; z-index: 4; width: 300px; height: 490px; mix-blend-mode: multiply; pointer-events: none; }
```
